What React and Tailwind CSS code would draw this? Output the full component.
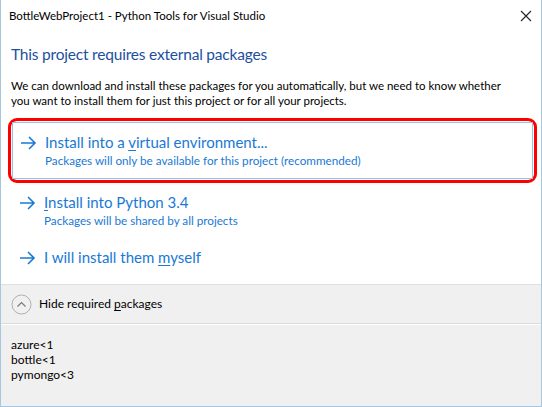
import React from 'react';

const font = { fontFamily: 'Lato, "Liberation Sans", sans-serif' };

const Arrow = () => (
  <svg width="17" height="14" viewBox="0 0 17 14" className="shrink-0">
    <path d="M1 7h14M9 1l6 6-6 6" fill="none" stroke="#1979d6" strokeWidth="1.6" />
  </svg>
);

const Option = ({ title, sub }) => (
  <div className="flex items-start gap-[8px] pl-[7px]">
    <div className="pt-[5px]">
      <Arrow />
    </div>
    <div className="flex flex-col">
      <span className="text-[15px] leading-[22px] text-[#1979d6]">{title}</span>
      {sub && <span className="text-[11.7px] leading-[15px] text-[#1979d6]">{sub}</span>}
    </div>
  </div>
);

const App = () => {
  return (
    <div
      className="w-[542px] h-[407px] flex flex-col bg-white border border-t-0 border-[#a9c6df] overflow-hidden"
      style={font}
    >
      {/* title bar */}
      <div className="h-[31px] flex items-center justify-between pl-[8px] pr-[8px] shrink-0">
        <span className="text-[11.5px] text-black">BottleWebProject1 - Python Tools for Visual Studio</span>
        <svg width="12" height="12" viewBox="0 0 12 12" className="mr-[1px]">
          <path d="M1 1l10 10M11 1L1 11" stroke="#222" strokeWidth="1.1" />
        </svg>
      </div>

      {/* main */}
      <div className="flex flex-col px-[10px] shrink-0">
        <h1 className="text-[15.5px] leading-[24px] tracking-[-0.2px] mt-[11px] text-[#1c4fa0]">
          This project requires external packages
        </h1>
        <p className="max-w-[500px] text-[11.5px] leading-[15px] text-black mt-[12px]">
          We can download and install these packages for you automatically, but we need to know whether
          you want to install them for just this project or for all your projects.
        </p>
      </div>

      <div className="flex flex-col mt-[10px] shrink-0">
        {/* highlighted option (red annotation) */}
        <div className="ml-[7px] w-[529px] border-[3px] border-[#ff0000] rounded-[9px] p-[1px]">
          <div className="border border-[#99c2e6] h-[57px] pt-[8px]">
            <Option
              title={<>Install into a <u className="underline-offset-2">v</u>irtual environment...</>}
              sub="Packages will only be available for this project (recommended)"
            />
          </div>
        </div>
        <div className="h-[57px] pt-[8px] pl-[11px]">
          <Option
            title={<><u className="underline-offset-2">I</u>nstall into Python 3.4</>}
            sub="Packages will be shared by all projects"
          />
        </div>
        <div className="h-[44px] pt-[6px] pl-[11px]">
          <Option title={<>I will install them <u className="underline-offset-2">m</u>yself</>} />
        </div>
      </div>

      {/* footer */}
      <div className="flex-1 flex flex-col bg-[#f0f0f0] border-t border-[#dfdfdf]">
        <div className="h-[39px] flex items-center gap-[7px] pl-[10px] border-b border-[#dcdcdc] shrink-0">
          <svg width="21" height="21" viewBox="0 0 21 21">
            <circle cx="10.5" cy="10.5" r="9.5" fill="none" stroke="#b0b0b0" strokeWidth="1" />
            <path d="M6.5 12.5l4-4 4 4" fill="none" stroke="#7a7a7a" strokeWidth="1.2" />
          </svg>
          <span className="text-[12px] text-black">
            Hide required <u className="underline-offset-2">p</u>ackages
          </span>
        </div>
        <div className="border-t border-white pt-[12px] pl-[10px] flex flex-col text-[12px] text-black">
          <span className="leading-[15px]">azure&lt;1</span>
          <span className="leading-[15px]">bottle&lt;1</span>
          <span className="leading-[15px]">pymongo&lt;3</span>
        </div>
      </div>
    </div>
  );
};

export default App;
